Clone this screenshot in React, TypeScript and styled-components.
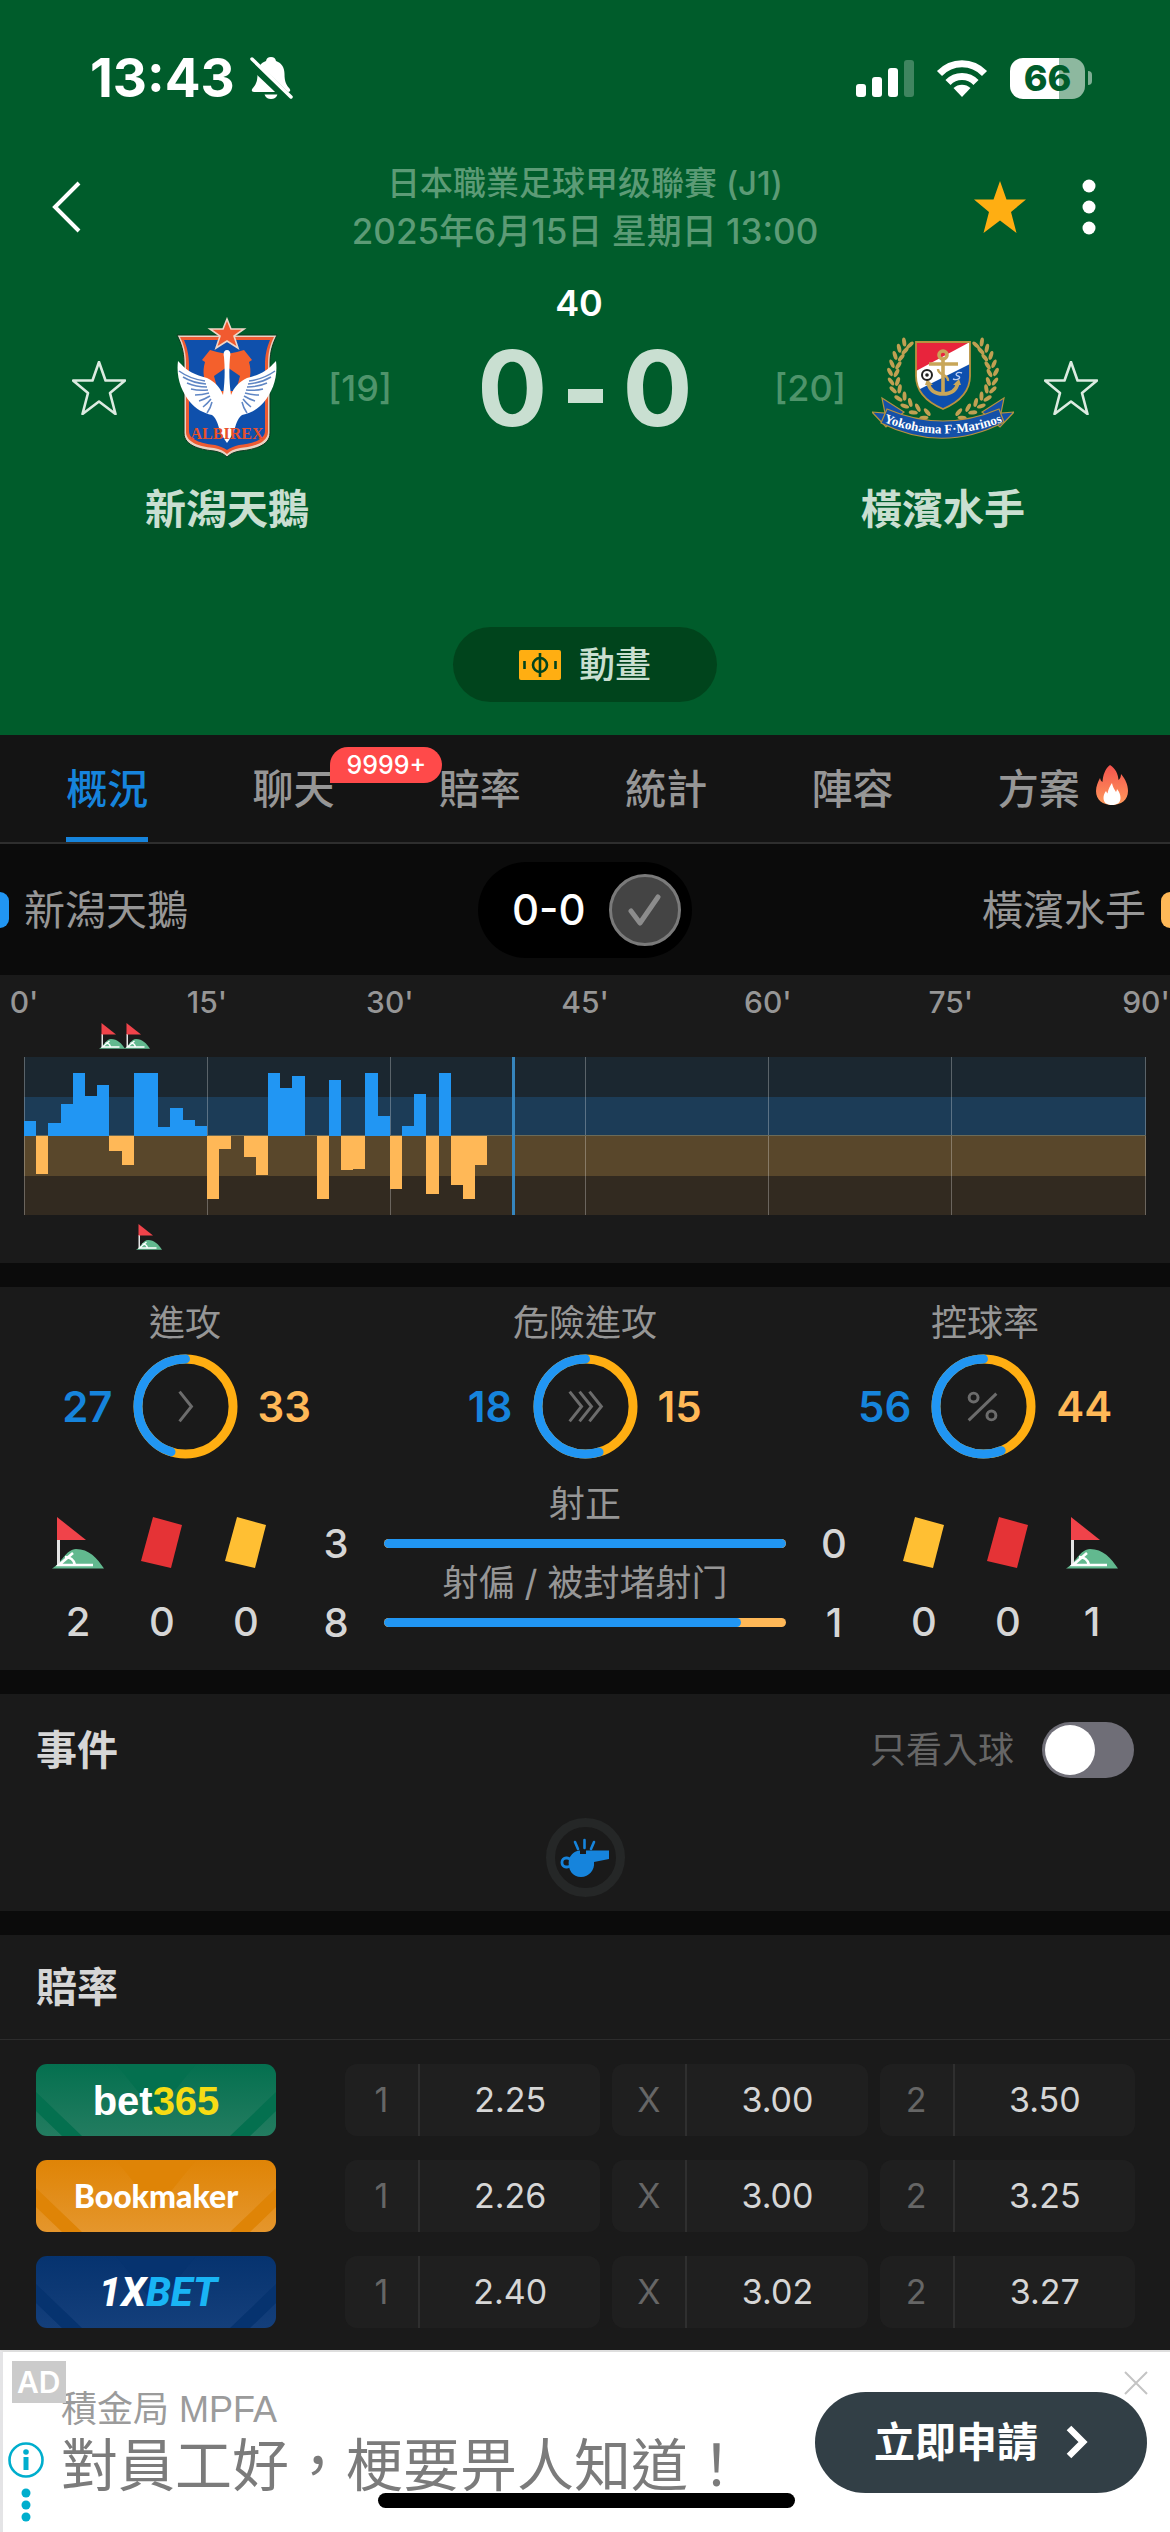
import React, { useState } from "react";
import styled, { createGlobalStyle } from "styled-components";

const BLUE = "#2196f3";
const ORANGE = "#ffb857";
const AMBER = "#ffae12";

const GlobalStyle = createGlobalStyle`
  *, *::before, *::after { box-sizing: border-box; }
  body {
    margin: 0;
    background: #0b0b0b;
    color: #d6d6d6;
    font-family: Inter, "Noto Sans CJK TC", sans-serif;
    font-size: 36px;
    overflow-x: hidden;
  }
  button {
    font: inherit;
    color: inherit;
    background: none;
    border: 0;
    padding: 0;
    cursor: pointer;
  }
  svg { display: block; flex: none; }
  h1, h2, p { margin: 0; font: inherit; }
`;

const Screen = styled.div`
  display: flex;
  flex-direction: column;
  gap: 24px;
  overflow: hidden;
`;

const Top = styled.div``;

/* ---------- green match header ---------- */

const MatchHeader = styled.header`
  background: #005c2b;
  padding-bottom: 33px;
`;

const StatusBar = styled.div`
  display: flex;
  align-items: center;
  justify-content: space-between;
  height: 156px;
  padding: 0 78px 0 90px;
  color: #fff;
`;

const StatusGroup = styled.div<{ $gap: number }>`
  display: flex;
  align-items: center;
  gap: ${(p) => p.$gap}px;
`;

const Clock = styled.span`
  font-size: 53px;
  line-height: 60px;
  font-weight: 700;
`;

const Battery = styled.div`
  display: flex;
  align-items: center;
  gap: 3px;
  &::after {
    content: "";
    width: 4px;
    height: 14px;
    border-radius: 0 4px 4px 0;
    background: #7fae94;
  }
`;

const BatteryBody = styled.span`
  width: 75px;
  height: 41px;
  border-radius: 13px;
  background: linear-gradient(90deg, #fff 66%, #8db89f 66%);
  color: #005c2b;
  font-size: 36px;
  line-height: 41px;
  font-weight: 800;
  text-align: center;
`;

const Toolbar = styled.div`
  display: grid;
  grid-template-columns: 200px 1fr 200px;
  align-items: center;
  padding: 3px 0;
`;

const BackButton = styled.button`
  justify-self: start;
  padding: 20px 40px 20px 51px;
`;

const ToolbarActions = styled.div`
  display: flex;
  justify-self: end;
  align-items: center;
  gap: 55px;
  padding-right: 74px;
`;

const Heading = styled.div`
  color: #5c9b76;
  font-weight: 500;
  line-height: 48px;
  text-align: center;
`;

const League = styled.h1`
  && { font-size: 33px; }
`;

const Kickoff = styled.p`
  && { font-size: 35px; }
`;

const Versus = styled.div`
  display: grid;
  grid-template-columns: 54px 202px 64px 1fr 64px 202px 54px;
  justify-items: center;
  align-items: center;
  padding: 21px 72px 0;
`;

const SideCell = styled.div`
  display: flex;
  padding-top: 12px;
`;

const Rank = styled(SideCell)`
  color: #4f946b;
  line-height: 48px;
  font-weight: 500;
`;

const ScoreCell = styled.div`
  align-self: start;
  display: flex;
  flex-direction: column;
  align-items: center;
  gap: 9px;
  height: 206px;
`;

const Minute = styled.div`
  padding-right: 12px;
  color: #fff;
  font-size: 36px;
  font-weight: 600;
  line-height: 48px;
`;

const Score = styled.div`
  display: flex;
  gap: 20px;
  color: #c9dfd1;
  font-size: 104px;
  font-weight: 700;
  line-height: 104px;
`;

const ScoreDash = styled.span`
  align-self: center;
  width: 35px;
  height: 14px;
  margin-top: 15px;
  background: #c9dfd1;
`;

const TeamName = styled.div<{ $column: number }>`
  grid-column: ${(p) => p.$column};
  color: #c9dfd1;
  font-size: 41px;
  font-weight: 600;
  line-height: 48px;
  white-space: nowrap;
`;

const AnimationButton = styled.button`
  display: flex;
  align-items: center;
  justify-content: center;
  gap: 18px;
  width: 264px;
  height: 75px;
  margin: 94px auto 0;
  border-radius: 38px;
  background: #00441c;
  color: #c9dfd1;
  font-size: 36px;
  font-weight: 500;
  line-height: 48px;
`;

/* ---------- tabs ---------- */

const Tabs = styled.nav`
  display: grid;
  grid-template-columns: repeat(6, 1fr);
  padding: 0 38px 0 14px;
  background: #141414;
  border-bottom: 2px solid #2e2e2e;
`;

const Tab = styled.button<{ $active?: boolean }>`
  position: relative;
  justify-self: center;
  height: 107px;
  border-bottom: 5px solid ${(p) => (p.$active ? "#1684dc" : "transparent")};
  color: ${(p) => (p.$active ? "#1684dc" : "#969696")};
  font-size: 41px;
  font-weight: 500;
  white-space: nowrap;
`;

const UnreadBadge = styled.span`
  position: absolute;
  left: 78px;
  top: 12px;
  z-index: 1;
  padding: 0 16px;
  border-radius: 18px 18px 18px 0;
  background: #ff4a4a;
  color: #fff;
  font-size: 25px;
  font-weight: 500;
  line-height: 36px;
`;

const TabIcon = styled.span`
  position: absolute;
  left: 98px;
  top: 30px;
`;

/* ---------- team legend ---------- */

const Legend = styled.div`
  display: grid;
  grid-template-columns: 1fr auto 1fr;
  align-items: center;
  height: 131px;
  background: #0b0b0b;
  color: #969696;
  font-size: 41px;
  line-height: 48px;
`;

const LegendTeam = styled.div<{ $color: string; $end?: boolean }>`
  display: flex;
  flex-direction: ${(p) => (p.$end ? "row-reverse" : "row")};
  align-items: center;
  gap: 15px;
  &::before {
    content: "";
    width: 9px;
    height: 36px;
    border-radius: ${(p) => (p.$end ? "9px 0 0 9px" : "0 9px 9px 0")};
    background: ${(p) => p.$color};
  }
`;

const ScorePill = styled.div`
  display: flex;
  align-items: center;
  justify-content: space-between;
  width: 214px;
  height: 96px;
  padding: 0 11px 0 34px;
  border-radius: 48px;
  background: #000;
  color: #fff;
  font-size: 42px;
  font-weight: 500;
`;

const CheckButton = styled.button`
  display: grid;
  place-items: center;
  width: 72px;
  height: 72px;
  border: 3px solid #7a7a7a;
  border-radius: 50%;
  background: #444;
`;

/* ---------- panels ---------- */

const Panel = styled.section`
  background: #1a1a1a;
`;

const ChartBody = styled.div`
  padding: 9px 24px 11px;
`;

const Axis = styled.div`
  display: grid;
  grid-template-columns: 15fr 15fr 16fr 15fr 15fr 16fr 0;
  color: #969696;
  font-size: 30px;
  font-weight: 500;
  line-height: 36px;
`;

const AxisLabel = styled.span`
  display: flex;
  justify-content: center;
  width: 0;
  white-space: nowrap;
`;

const ChartSvg = styled.svg`
  width: 100%;
  height: auto;
`;

const Rings = styled.div`
  display: flex;
  justify-content: space-between;
  padding: 12px 58px 0;
`;

const Ring = styled.div`
  display: flex;
  flex-direction: column;
  align-items: center;
  gap: 7px;
  width: 254px;
  color: #969696;
  line-height: 48px;
`;

const RingRow = styled.div`
  display: grid;
  grid-template-columns: 1fr 105px 1fr;
  align-items: center;
  gap: 20px;
  width: 100%;
`;

const RingValue = styled.span<{ $away?: boolean }>`
  justify-self: ${(p) => (p.$away ? "start" : "end")};
  color: ${(p) => (p.$away ? ORANGE : "#1684dc")};
  font-size: 42px;
  font-weight: 600;
`;

const Shots = styled.div`
  display: grid;
  grid-template-columns: 252px 1fr 252px;
  padding: 22px 36px 28px;
`;

const Counters = styled.div`
  display: grid;
  grid-template-columns: repeat(3, 1fr);
  padding-top: 36px;
`;

const Counter = styled.div`
  display: flex;
  flex-direction: column;
  align-items: center;
  gap: 33px;
  font-size: 40px;
  font-weight: 500;
  line-height: 40px;
`;

const Bars = styled.div`
  display: grid;
  grid-template-columns: 96px 1fr 96px;
  grid-template-rows: 46px 33px 46px 33px;
  align-items: center;
  justify-items: center;
`;

const BarLabel = styled.span`
  grid-column: 1 / -1;
  color: #969696;
  line-height: 46px;
`;

const BarValue = styled.span`
  font-size: 40px;
  font-weight: 500;
  line-height: 33px;
`;

const BarTrack = styled.div`
  width: 100%;
  height: 9px;
  border-radius: 5px;
  background: ${ORANGE};
  overflow: hidden;
`;

const BarFill = styled.div`
  height: 100%;
  border-radius: 5px;
  background: ${BLUE};
`;

/* ---------- events ---------- */

const PanelTitle = styled.h2`
  && {
    font-size: 41px;
    font-weight: 600;
    line-height: 56px;
  }
`;

const EventsHead = styled.div`
  display: flex;
  align-items: center;
  justify-content: space-between;
  padding: 28px 36px 0;
`;

const GoalsOnly = styled.label`
  display: flex;
  align-items: center;
  gap: 28px;
  color: #666;
  line-height: 48px;
`;

const Switch = styled.input`
  appearance: none;
  width: 92px;
  height: 56px;
  margin: 0;
  padding: 3px;
  border-radius: 28px;
  background: #6f6e77;
  &::before {
    content: "";
    display: block;
    width: 50px;
    height: 50px;
    border-radius: 50%;
    background: #fff;
  }
  &:checked { background: ${BLUE}; }
  &:checked::before { margin-left: 36px; }
`;

const WhistleRing = styled.div`
  display: grid;
  place-items: center;
  width: 79px;
  height: 79px;
  margin: 40px auto 14px;
  border: 9px solid #252727;
  border-radius: 50%;
`;

const EventsPanel = styled(Panel)`
  display: flow-root;
`;

/* ---------- odds ---------- */

const OddsPanel = styled(Panel)`
  margin-bottom: -24px;
`;

const OddsHead = styled.div`
  padding: 24px 36px;
  border-bottom: 1px solid #2c2c2c;
`;

const OddsTable = styled.table`
  width: 100%;
  padding: 0 23px 0 24px;
  border-collapse: separate;
  border-spacing: 12px 24px;
  table-layout: fixed;
  margin-bottom: -2px;
`;

const BookieCell = styled.th`
  width: 297px;
  padding: 0;
  text-align: left;
`;

const OddsCell = styled.td`
  padding: 0;
`;

const Odds = styled.button`
  display: grid;
  grid-template-columns: 75px 1fr;
  width: 100%;
  height: 72px;
  border-radius: 12px;
  background: #1f1f1f;
  font-size: 34px;
  line-height: 72px;
`;

const Outcome = styled.span`
  border-right: 2px solid #2f2f2f;
  color: #666;
`;

/* ---------- advert ---------- */

const Advert = styled.aside`
  position: relative;
  display: grid;
  grid-template-columns: 58px 1fr auto;
  align-items: center;
  border-top: 2px solid #dedede;
  border-left: 3px solid #e4e4e6;
  background: #fff;
`;

const AdTag = styled.span`
  position: absolute;
  left: 9px;
  top: 9px;
  padding: 0 5px;
  background: #cbcbcb;
  color: #fff;
  font-size: 30px;
  font-weight: 600;
  line-height: 42px;
`;

const AdInfo = styled.button`
  align-self: end;
  padding: 0 0 9px 5px;
`;

const AdText = styled.div`
  padding: 34px 0;
  white-space: nowrap;
`;

const AdSponsor = styled.p`
  && {
    color: #9b9b9b;
    font-family: "Liberation Sans", "Noto Sans CJK TC", sans-serif;
    font-size: 36px;
    line-height: 48px;
  }
`;

const AdHeadline = styled.p`
  && {
    color: #7b7b7b;
    font-size: 57px;
    line-height: 64px;
  }
`;

const AdCta = styled.button`
  display: flex;
  align-items: center;
  justify-content: center;
  gap: 28px;
  width: 332px;
  height: 101px;
  margin-right: 23px;
  border-radius: 51px;
  background: #323f46;
  color: #fff;
  font-size: 41px;
  font-weight: 600;
  line-height: 48px;
`;

const AdClose = styled.button`
  position: absolute;
  right: 22px;
  top: 19px;
`;

const HomeIndicator = styled.div`
  position: absolute;
  left: 50%;
  bottom: 24px;
  width: 417px;
  height: 15px;
  margin-left: -209px;
  border-radius: 8px;
  background: #000;
`;

/* ---------- icons ---------- */

const BellOff = () => (
  <svg width="44" height="44" viewBox="0 0 44 44">
    <path
      d="M22 1c3 0 4.500 1.500 5 4 6 2 8.500 7 8.500 13 0 8 2 11 5 14.500 1.500 2 .5 3.500-1.500 3.500H5c-2 0-3-1.500-1.500-3.500C6.500 29 8.500 26 8.500 18c0-6 2.500-11 8.500-13 .5-2.500 2-4 5-4zM15.500 38.500h13c-1 3-3.500 4.500-6.500 4.500s-5.500-1.500-6.500-4.500z"
      fill="#fff"
    />
    <path d="M1 6l39 37" stroke="#005c2b" strokeWidth="9" />
    <path d="M3 3l39 38" stroke="#fff" strokeWidth="3.500" strokeLinecap="round" />
  </svg>
);

const Signal = () => (
  <svg width="58" height="38" viewBox="0 0 58 38">
    {[13, 20, 29, 37].map((h, i) => (
      <rect key={h} x={i * 16} y={38 - h} width="10" height={h} rx="3" fill="#fff" opacity={i === 3 ? 0.25 : 1} />
    ))}
  </svg>
);

const Wifi = () => (
  <svg width="52" height="38" viewBox="0 0 52 38">
    <g fill="none" stroke="#fff" strokeWidth="7">
      <path d="M3.500 14.500C16 1.500 36 1.500 48.500 14.500" />
      <path d="M12 23.500C19.500 15.500 32.500 15.500 40 23.500" />
    </g>
    <path d="M26 38l-8.500-9c4.500-4.500 12.500-4.500 17 0z" fill="#fff" />
  </svg>
);

const STAR = "M27 1l6.500 18.500H53L38 32l5.500 21L27 40.500 10.500 53 16 32 1 19.500h19.500z";

const Star = ({ filled }: { filled?: boolean }) => (
  <svg width="54" height="54" viewBox="0 0 54 54">
    <path
      d={STAR}
      fill={filled ? AMBER : "none"}
      stroke={filled ? "none" : "#dcebe1"}
      strokeWidth="2.600"
      strokeLinejoin="round"
    />
  </svg>
);

const CornerFlag = ({ size = 52, x, y }: { size?: number; x?: number; y?: number }) => (
  <svg x={x} y={y} width={size} height={size} viewBox="0 0 52 52">
    <path d="M0 51.500C9 47 14 32 24 32c13 0 21 9 28 19.500z" fill="#62b98f" />
    <path d="M5 22h3v27H5z" fill="#e4e4e4" />
    <path d="M5 0l29 23H5z" fill="#f0434a" />
    <path d="M41 48H7l14-12M13 40c5 0 9 3 10 8" fill="none" stroke="#fff" strokeWidth="2.600" />
  </svg>
);

const Card = ({ color }: { color: string }) => (
  <svg width="42" height="52" viewBox="0 0 42 52">
    <path d="M12 0l29 8-11 43-30-7z" fill={color} />
  </svg>
);

const Fire = () => (
  <svg width="32" height="40" viewBox="0 0 32 40">
    <defs>
      <linearGradient id="flame" x1="0" y1="0" x2="0" y2="1">
        <stop offset="0" stopColor="#f4524d" />
        <stop offset="1" stopColor="#ff9a5c" />
      </linearGradient>
    </defs>
    <path
      d="M14 0c6 4 8 9 8.500 15 1.500-1 2.500-3 2.500-6 4.500 5 7 11 7 17 0 9-7 14-16 14S0 35 0 26c0-5 2-9 4-13 .5 2 1 3 2.500 4C7 10 9 4 14 0z"
      fill="url(#flame)"
    />
    <path d="M16 18c1 5 2.500 6 4 9 .5-1 1-2 1-3 2.500 3 3.500 6 3.500 9 0 5-4 7-8.500 7s-8.500-2-8.500-7c0-3 1-5 2.500-7 .5 1 1 2 1.500 2.500 1-4 1.500-6 4.500-10.500z" fill="#fff" />
  </svg>
);

const Whistle = () => (
  <svg width="50" height="40" viewBox="0 0 50 40">
    <g fill="none" stroke="#1684dc" strokeLinecap="round">
      <path d="M15 4l3 7M24.500 2v8M34 4l-3 7" strokeWidth="2.600" />
      <rect x="2" y="20" width="9" height="9" rx="4" strokeWidth="2.800" />
    </g>
    <path d="M9 21c2-5 6-8 11-8.500V16h6v-3.500h23V21L34 24c1 8-5 15-13 15S7 32 9 21z" fill="#1684dc" />
  </svg>
);

const PitchIcon = () => (
  <svg width="42" height="30" viewBox="0 0 42 30">
    <rect width="42" height="30" rx="2" fill={AMBER} />
    <g fill="none" stroke="#00441c" strokeWidth="2.600">
      <circle cx="21" cy="15" r="7" />
      <path d="M21 3v24M5.500 11v8M36.500 11v8" />
    </g>
  </svg>
);

const AlbirexCrest = () => (
  <svg width="102" height="142" viewBox="0 0 102 142" role="img" aria-label="新潟天鵝">
    <path
      d="M1 18H101C97 26 94 34 94 46v70c0 14-20 17-30 18-6 1-10 3-13 6-3-3-7-5-13-6-10-1-30-4-30-18V46C8 34 5 26 1 18z"
      fill="#e9d3c4"
      stroke="#0a3a20"
      strokeWidth="1"
    />
    <path
      d="M4 20H98C94 28 92 36 92 47v68c0 12-18 15-28 16-6 1-10 3-13 6-3-3-7-5-13-6-10-1-28-4-28-16V47C10 36 8 28 4 20z"
      fill="#ee5b32"
    />
    <path
      d="M8 23H94C91 30 89 38 89 48v66c0 10-16 13-26 14-5 1-9 3-12 5-3-2-7-4-12-5-10-1-26-4-26-14V48C13 38 11 30 8 23z"
      fill="#0f50ac"
    />
    <path
      d="M26 43l4-5 4-5 7 2 10 2 10-2 7-2 4 5 4 5-3 2c3 10 1 19-3 27-5 9-10 13-19 13s-14-4-19-13c-4-8-6-17-3-27z"
      fill="#f4602c"
    />
    <path d="M51 50l13 9-4 15H42l-4-15z" fill="#0f50ac" />
    <path
      d="M51 33c3 0 4 3 3 7-1 12-1 24 1 38 3-8 8-13 16-17 12-3 20-7 26-14l3-3c2 16-3 30-12 41-6 7-13 11-22 13-5 4-6 10-8 16-2 4-4 8-7 12-3-4-5-8-7-12-2-6-3-12-8-16-9-2-16-6-22-13C5 74 0 60 2 44l3 3c6 7 14 11 26 14 8 4 13 9 16 17 2-14 2-26 1-38-1-4 0-7 3-7z"
      fill="#fff"
    />
    <g fill="none" stroke="#5f86c4" strokeWidth="1.500">
      {[0, 1, 2, 3, 4, 5, 6, 7].map((i) => (
        <path key={i} d={`M${3 + i * 4} ${54 + i * 6}Q${14 + i * 3} ${62 + i * 4} ${29 + i} ${64 + i * 3}`} />
      ))}
      {[0, 1, 2, 3, 4, 5, 6, 7].map((i) => (
        <path key={i} d={`M${99 - i * 4} ${54 + i * 6}Q${88 - i * 3} ${62 + i * 4} ${73 - i} ${64 + i * 3}`} />
      ))}
    </g>
    <text x="51" y="122" textAnchor="middle" fontFamily="Liberation Serif, serif" fontSize="16" fontWeight="700" fill="#e8512a">
      ALBIREX
    </text>
    <path d="M51 2l4 10h13l-10 7 4 12-11-7-11 7 4-12-10-7h13z" fill="#f15a30" stroke="#f0d6c8" strokeWidth="1.600" />
  </svg>
);

const LEAVES = [
  [35, 6, 20], [30, 12, 15], [26, 19, 10], [23, 27, 5], [21, 35, 0], [22, 44, -8], [24, 52, -18], [29, 60, -30], [35, 67, -42], [43, 73, -55], [53, 78, -68],
];

const Wreath = () => (
  <g fill="#c0a052">
    {LEAVES.map(([x, y, a]) => (
      <g key={y} transform={`translate(${x} ${y}) rotate(${a})`}>
        <ellipse cx="-3" cy="0" rx="2" ry="4.600" transform="rotate(-28 -3 0)" />
        <ellipse cx="3.500" cy="1" rx="2" ry="4.600" transform="rotate(28 3.500 1)" />
      </g>
    ))}
  </g>
);

const MarinosCrest = () => (
  <svg width="142" height="102" viewBox="0 0 142 102" role="img" aria-label="橫濱水手">
    <defs>
      <clipPath id="shield">
        <path d="M44 5h54v34c0 17-13 27-27 33C57 66 44 56 44 39z" />
      </clipPath>
      <path id="ribbon" d="M12 85Q71 108 130 85" />
    </defs>
    <Wreath />
    <g transform="translate(142 0) scale(-1 1)">
      <Wreath />
    </g>
    <g clipPath="url(#shield)">
      <path d="M44 5h54v67H44z" fill="#fff" />
      <path d="M44 5h54L44 34z" fill="#e8243c" />
      <path d="M98 27v46H44V54z" fill="#0d4fae" />
    </g>
    <path d="M44 5h54v34c0 17-13 27-27 33C57 66 44 56 44 39z" fill="none" stroke="#b8923f" strokeWidth="1.800" />
    <g fill="none" stroke="#c8a659" strokeWidth="3.600">
      <circle cx="71" cy="18" r="4" />
      <path d="M71 22v34M57 27h29M56 46c2 8 8 11 15 11s13-3 15-11" />
      <path d="M66 32c0 7 11 5 10 12" strokeWidth="2.400" />
    </g>
    <path d="M53 48h8l-6-6zM89 48h-8l6-6z" fill="#c8a659" />
    <circle cx="55" cy="38" r="5" fill="#fff" stroke="#222" strokeWidth="2" />
    <circle cx="55" cy="38" r="1.800" fill="#222" />
    <path d="M90 36c-5-2-8 2-4 3s0 5-5 3" fill="none" stroke="#b9cdf0" strokeWidth="1.400" />
    <g fill="#1450a8" stroke="#b8923f" strokeWidth="1.200">
      <path d="M0 75l13 1-3-15 22 14-18 15z" />
      <path d="M142 75l-13 1 3-15-22 14 18 15z" />
      <path d="M15 72Q71 96 127 72l5 13Q71 117 9 86z" />
    </g>
    <text fontFamily="Liberation Serif, serif" fontSize="13" fontWeight="700" fill="#fff">
      <textPath href="#ribbon" startOffset="50%" textAnchor="middle">
        Yokohama F·Marinos
      </textPath>
    </text>
  </svg>
);

/* ---------- momentum chart ---------- */

// One entry per minute: positive is home pressure, negative is away.
const MOMENTUM = [
  15, -38, 13, 32, 63, 40, 51, -15, -29, 63, 63, 9, 28, 16, 10, -63, -13, 0, -21, -39, 63, 48, 60, 0, -63, 56, -34, -33,
  63, 20, -53, 10, 42, -58, 63, -49, -63, -29,
];
const SLOT = 1122 / 92;
const GRID = [0, 15, 30, 46, 61, 76, 92];

const MomentumChart = () => (
  <ChartSvg viewBox="0 0 1122 232" role="img" aria-label="0-0">
    <CornerFlag size={26} x={75} y={3} />
    <CornerFlag size={26} x={100} y={3} />
    <g shapeRendering="crispEdges">
      <rect y="37" width="1122" height="40" fill="#1b2730" />
      <rect y="77" width="1122" height="39" fill="#1c3c57" />
      <rect y="116" width="1122" height="40" fill="#59472b" />
      <rect y="156" width="1122" height="39" fill="#322a20" />
      {GRID.map((g) => (
        <rect key={g} x={Math.min(Math.round(g * SLOT), 1121)} y="37" width="1" height="158" fill="#fff" opacity="0.28" />
      ))}
      <rect y="115" width="1122" height="1" fill="#6a6a58" />
      {MOMENTUM.map((v, i) => {
        const x = Math.round(i * SLOT);
        return (
          <rect
            key={i}
            x={x}
            y={v > 0 ? 116 - v : 116}
            width={Math.round((i + 1) * SLOT) - x}
            height={Math.abs(v)}
            fill={v > 0 ? BLUE : ORANGE}
          />
        );
      })}
      <rect x="488" y="37" width="3" height="158" fill="#3685bd" />
    </g>
    <CornerFlag size={26} x={112} y={204} />
  </ChartSvg>
);

/* ---------- rings ---------- */

const R = 48;
const CIRC = 2 * Math.PI * R;

// The home share runs anticlockwise from the top over the away colour.
const Donut = ({ home, away, children }: { home: number; away: number; children: React.ReactNode }) => (
  <svg width="105" height="105" viewBox="0 0 106 106">
    <circle cx="53" cy="53" r={R} fill="none" stroke={AMBER} strokeWidth="9" />
    <circle
      cx="53"
      cy="53"
      r={R}
      fill="none"
      stroke={BLUE}
      strokeWidth="9"
      strokeLinecap="round"
      strokeDasharray={`${(CIRC * home) / (home + away)} ${CIRC}`}
      transform="rotate(-90 53 53) translate(0 106) scale(1 -1)"
    />
    <g fill="none" stroke="#6c6c6c" strokeWidth="3">
      {children}
    </g>
  </svg>
);

const RINGS = [
  { label: "進攻", home: 27, away: 33, icon: <path d="M47 38l12 15-12 15" /> },
  { label: "危險進攻", home: 18, away: 15, icon: <path d="M37 38l12 15-12 15M47 38l12 15-12 15M57 38l12 15-12 15" /> },
  {
    label: "控球率",
    home: 56,
    away: 44,
    icon: (
      <>
        <circle cx="43" cy="44" r="4.500" />
        <circle cx="61" cy="62" r="4.500" />
        <path d="M66 40L38 67" />
      </>
    ),
  },
];

/* ---------- odds data ---------- */

const BADGES = {
  bet365: { base: "#04704f", light: "#237c60" },
  Bookmaker: { base: "#df8406", light: "#e5962c" },
  "1XBET": { base: "#06336f", light: "#143f7b" },
};
type Bookie = keyof typeof BADGES;

const BookieLogo = ({ name }: { name: Bookie }) => {
  const { base, light } = BADGES[name];
  const id = `badge-${name}`;
  return (
    <svg width="240" height="72" viewBox="0 0 240 72">
      <defs>
        <linearGradient id={id} x1="0" y1="0" x2="0" y2="1">
          <stop offset="0" stopColor={base} />
          <stop offset="1" stopColor={light} />
        </linearGradient>
        <clipPath id={`${id}-clip`}>
          <rect width="240" height="72" rx="11" />
        </clipPath>
      </defs>
      <g clipPath={`url(#${id}-clip)`}>
        <rect width="240" height="72" fill={`url(#${id})`} />
        <path d="M80 0h80l-40 50zM0 28l46 44H26L0 47zM240 28l-46 44h20l26-25z" fill={base} />
      </g>
      {name === "bet365" && (
        <text x="120" y="51" textAnchor="middle" fontFamily="Liberation Sans, sans-serif" fontSize="40" fontWeight="700" fill="#fff">
          bet<tspan fill="#f6dc14">365</tspan>
        </text>
      )}
      {name === "Bookmaker" && (
        <text x="120" y="48" textAnchor="middle" fontFamily="Lato, sans-serif" fontSize="32" fontWeight="900" fill="#fff">
          Bookmaker
        </text>
      )}
      {name === "1XBET" && (
        <text x="122" y="50" textAnchor="middle" fontFamily="Roboto, sans-serif" fontSize="40" fontStyle="italic" fontWeight="800" fill="#fff">
          1X<tspan fill="#19b5f5">BET</tspan>
        </text>
      )}
    </svg>
  );
};

const ODDS: { bookie: Bookie; prices: string[] }[] = [
  { bookie: "bet365", prices: ["2.25", "3.00", "3.50"] },
  { bookie: "Bookmaker", prices: ["2.26", "3.00", "3.25"] },
  { bookie: "1XBET", prices: ["2.40", "3.02", "3.27"] },
];
const OUTCOMES = ["1", "X", "2"];

const TABS = ["概況", "聊天", "賠率", "統計", "陣容", "方案"];

export default function App() {
  const [tab, setTab] = useState("概況");
  const [goalsOnly, setGoalsOnly] = useState(false);

  return (
    <>
      <GlobalStyle />
      <Screen>
        <Top>
          <MatchHeader>
            <StatusBar>
              <StatusGroup $gap={14}>
                <Clock>13:43</Clock>
                <BellOff />
              </StatusGroup>
              <StatusGroup $gap={22}>
                <Signal />
                <Wifi />
                <Battery>
                  <BatteryBody>66</BatteryBody>
                </Battery>
              </StatusGroup>
            </StatusBar>

            <Toolbar>
              <BackButton aria-label="返回">
                <svg width="30" height="52" viewBox="0 0 30 52">
                  <path d="M28 2L4 26l24 24" fill="none" stroke="#fff" strokeWidth="4" />
                </svg>
              </BackButton>
              <Heading>
                <League>日本職業足球甲级聯賽 (J1)</League>
                <Kickoff>2025年6月15日 星期日 13:00</Kickoff>
              </Heading>
              <ToolbarActions>
                <button aria-label="收藏比賽">
                  <Star filled />
                </button>
                <button aria-label="更多">
                  <svg width="14" height="56" viewBox="0 0 14 56" fill="#fff">
                    <circle cx="7" cy="7" r="6.500" />
                    <circle cx="7" cy="28" r="6.500" />
                    <circle cx="7" cy="49" r="6.500" />
                  </svg>
                </button>
              </ToolbarActions>
            </Toolbar>

            <Versus>
              <SideCell>
                <button aria-label="收藏新潟天鵝">
                  <Star />
                </button>
              </SideCell>
              <SideCell>
                <AlbirexCrest />
              </SideCell>
              <Rank>[19]</Rank>
              <ScoreCell>
                <Minute>40</Minute>
                <Score>
                  <span>0</span>
                  <ScoreDash />
                  <span>0</span>
                </Score>
              </ScoreCell>
              <Rank>[20]</Rank>
              <SideCell>
                <MarinosCrest />
              </SideCell>
              <SideCell>
                <button aria-label="收藏橫濱水手">
                  <Star />
                </button>
              </SideCell>
              <TeamName $column={2}>新潟天鵝</TeamName>
              <TeamName $column={6}>橫濱水手</TeamName>
            </Versus>

            <AnimationButton>
              <PitchIcon />
              動畫
            </AnimationButton>
          </MatchHeader>

          <Tabs>
            {TABS.map((t) => (
              <Tab key={t} $active={t === tab} onClick={() => setTab(t)}>
                {t}
                {t === "聊天" && <UnreadBadge>9999+</UnreadBadge>}
                {t === "方案" && (
                  <TabIcon>
                    <Fire />
                  </TabIcon>
                )}
              </Tab>
            ))}
          </Tabs>

          <Legend>
            <LegendTeam $color={BLUE}>新潟天鵝</LegendTeam>
            <ScorePill>
              0-0
              <CheckButton aria-label="切換">
                <svg width="34" height="34" viewBox="0 0 34 34">
                  <path d="M3 18l9 12L30 4" fill="none" stroke="#8c8c8c" strokeWidth="5" strokeLinecap="round" strokeLinejoin="round" />
                </svg>
              </CheckButton>
            </ScorePill>
            <LegendTeam $color={ORANGE} $end>
              橫濱水手
            </LegendTeam>
          </Legend>

          <Panel>
            <ChartBody>
              <Axis>
                {[0, 15, 30, 45, 60, 75, 90].map((m) => (
                  <AxisLabel key={m}>{m}'</AxisLabel>
                ))}
              </Axis>
              <MomentumChart />
            </ChartBody>
          </Panel>
        </Top>

        <Panel>
          <Rings>
            {RINGS.map((r) => (
              <Ring key={r.label}>
                <span>{r.label}</span>
                <RingRow>
                  <RingValue>{r.home}</RingValue>
                  <Donut home={r.home} away={r.away}>
                    {r.icon}
                  </Donut>
                  <RingValue $away>{r.away}</RingValue>
                </RingRow>
              </Ring>
            ))}
          </Rings>
          <Shots>
            <Counters>
              <Counter>
                <CornerFlag />2
              </Counter>
              <Counter>
                <Card color="#e53336" />0
              </Counter>
              <Counter>
                <Card color="#ffbf33" />0
              </Counter>
            </Counters>
            <Bars>
              <BarLabel>射正</BarLabel>
              <BarValue>3</BarValue>
              <BarTrack>
                <BarFill style={{ width: "100%" }} />
              </BarTrack>
              <BarValue>0</BarValue>
              <BarLabel>射偏 / 被封堵射门</BarLabel>
              <BarValue>8</BarValue>
              <BarTrack>
                <BarFill style={{ width: `${(8 / 9) * 100}%` }} />
              </BarTrack>
              <BarValue>1</BarValue>
            </Bars>
            <Counters>
              <Counter>
                <Card color="#ffbf33" />0
              </Counter>
              <Counter>
                <Card color="#e53336" />0
              </Counter>
              <Counter>
                <CornerFlag />1
              </Counter>
            </Counters>
          </Shots>
        </Panel>

        <EventsPanel>
          <EventsHead>
            <PanelTitle>事件</PanelTitle>
            <GoalsOnly>
              只看入球
              <Switch type="checkbox" role="switch" checked={goalsOnly} onChange={(e) => setGoalsOnly(e.target.checked)} />
            </GoalsOnly>
          </EventsHead>
          <WhistleRing>
            <Whistle />
          </WhistleRing>
        </EventsPanel>

        <OddsPanel>
          <OddsHead>
            <PanelTitle>賠率</PanelTitle>
          </OddsHead>
          <OddsTable>
            <tbody>
              {ODDS.map((row) => (
                <tr key={row.bookie}>
                  <BookieCell scope="row">
                    <BookieLogo name={row.bookie} />
                  </BookieCell>
                  {row.prices.map((price, i) => (
                    <OddsCell key={i}>
                      <Odds>
                        <Outcome>{OUTCOMES[i]}</Outcome>
                        <span>{price}</span>
                      </Odds>
                    </OddsCell>
                  ))}
                </tr>
              ))}
            </tbody>
          </OddsTable>
        </OddsPanel>

        <Advert>
          <AdTag>AD</AdTag>
          <AdInfo aria-label="廣告資訊">
            <svg width="36" height="82" viewBox="0 0 36 82" fill="#00aecd">
              <circle cx="18" cy="19" r="16.500" fill="none" stroke="#00aecd" strokeWidth="2.600" />
              <circle cx="18" cy="11" r="2.800" />
              <path d="M15.500 16h5v13h-5z" />
              <circle cx="18" cy="52" r="4.500" />
              <circle cx="18" cy="64" r="4.500" />
              <circle cx="18" cy="76" r="4.500" />
            </svg>
          </AdInfo>
          <AdText>
            <AdSponsor>積金局 MPFA</AdSponsor>
            <AdHeadline>對員工好，梗要畀人知道！</AdHeadline>
          </AdText>
          <AdCta>
            立即申請
            <svg width="22" height="34" viewBox="0 0 22 34">
              <path d="M3 3l14 14L3 31" fill="none" stroke="#fff" strokeWidth="6.500" />
            </svg>
          </AdCta>
          <AdClose aria-label="關閉廣告">
            <svg width="24" height="24" viewBox="0 0 24 24">
              <path d="M1 1l22 22M23 1L1 23" stroke="#c4c4c4" strokeWidth="2" />
            </svg>
          </AdClose>
          <HomeIndicator />
        </Advert>
      </Screen>
    </>
  );
}
